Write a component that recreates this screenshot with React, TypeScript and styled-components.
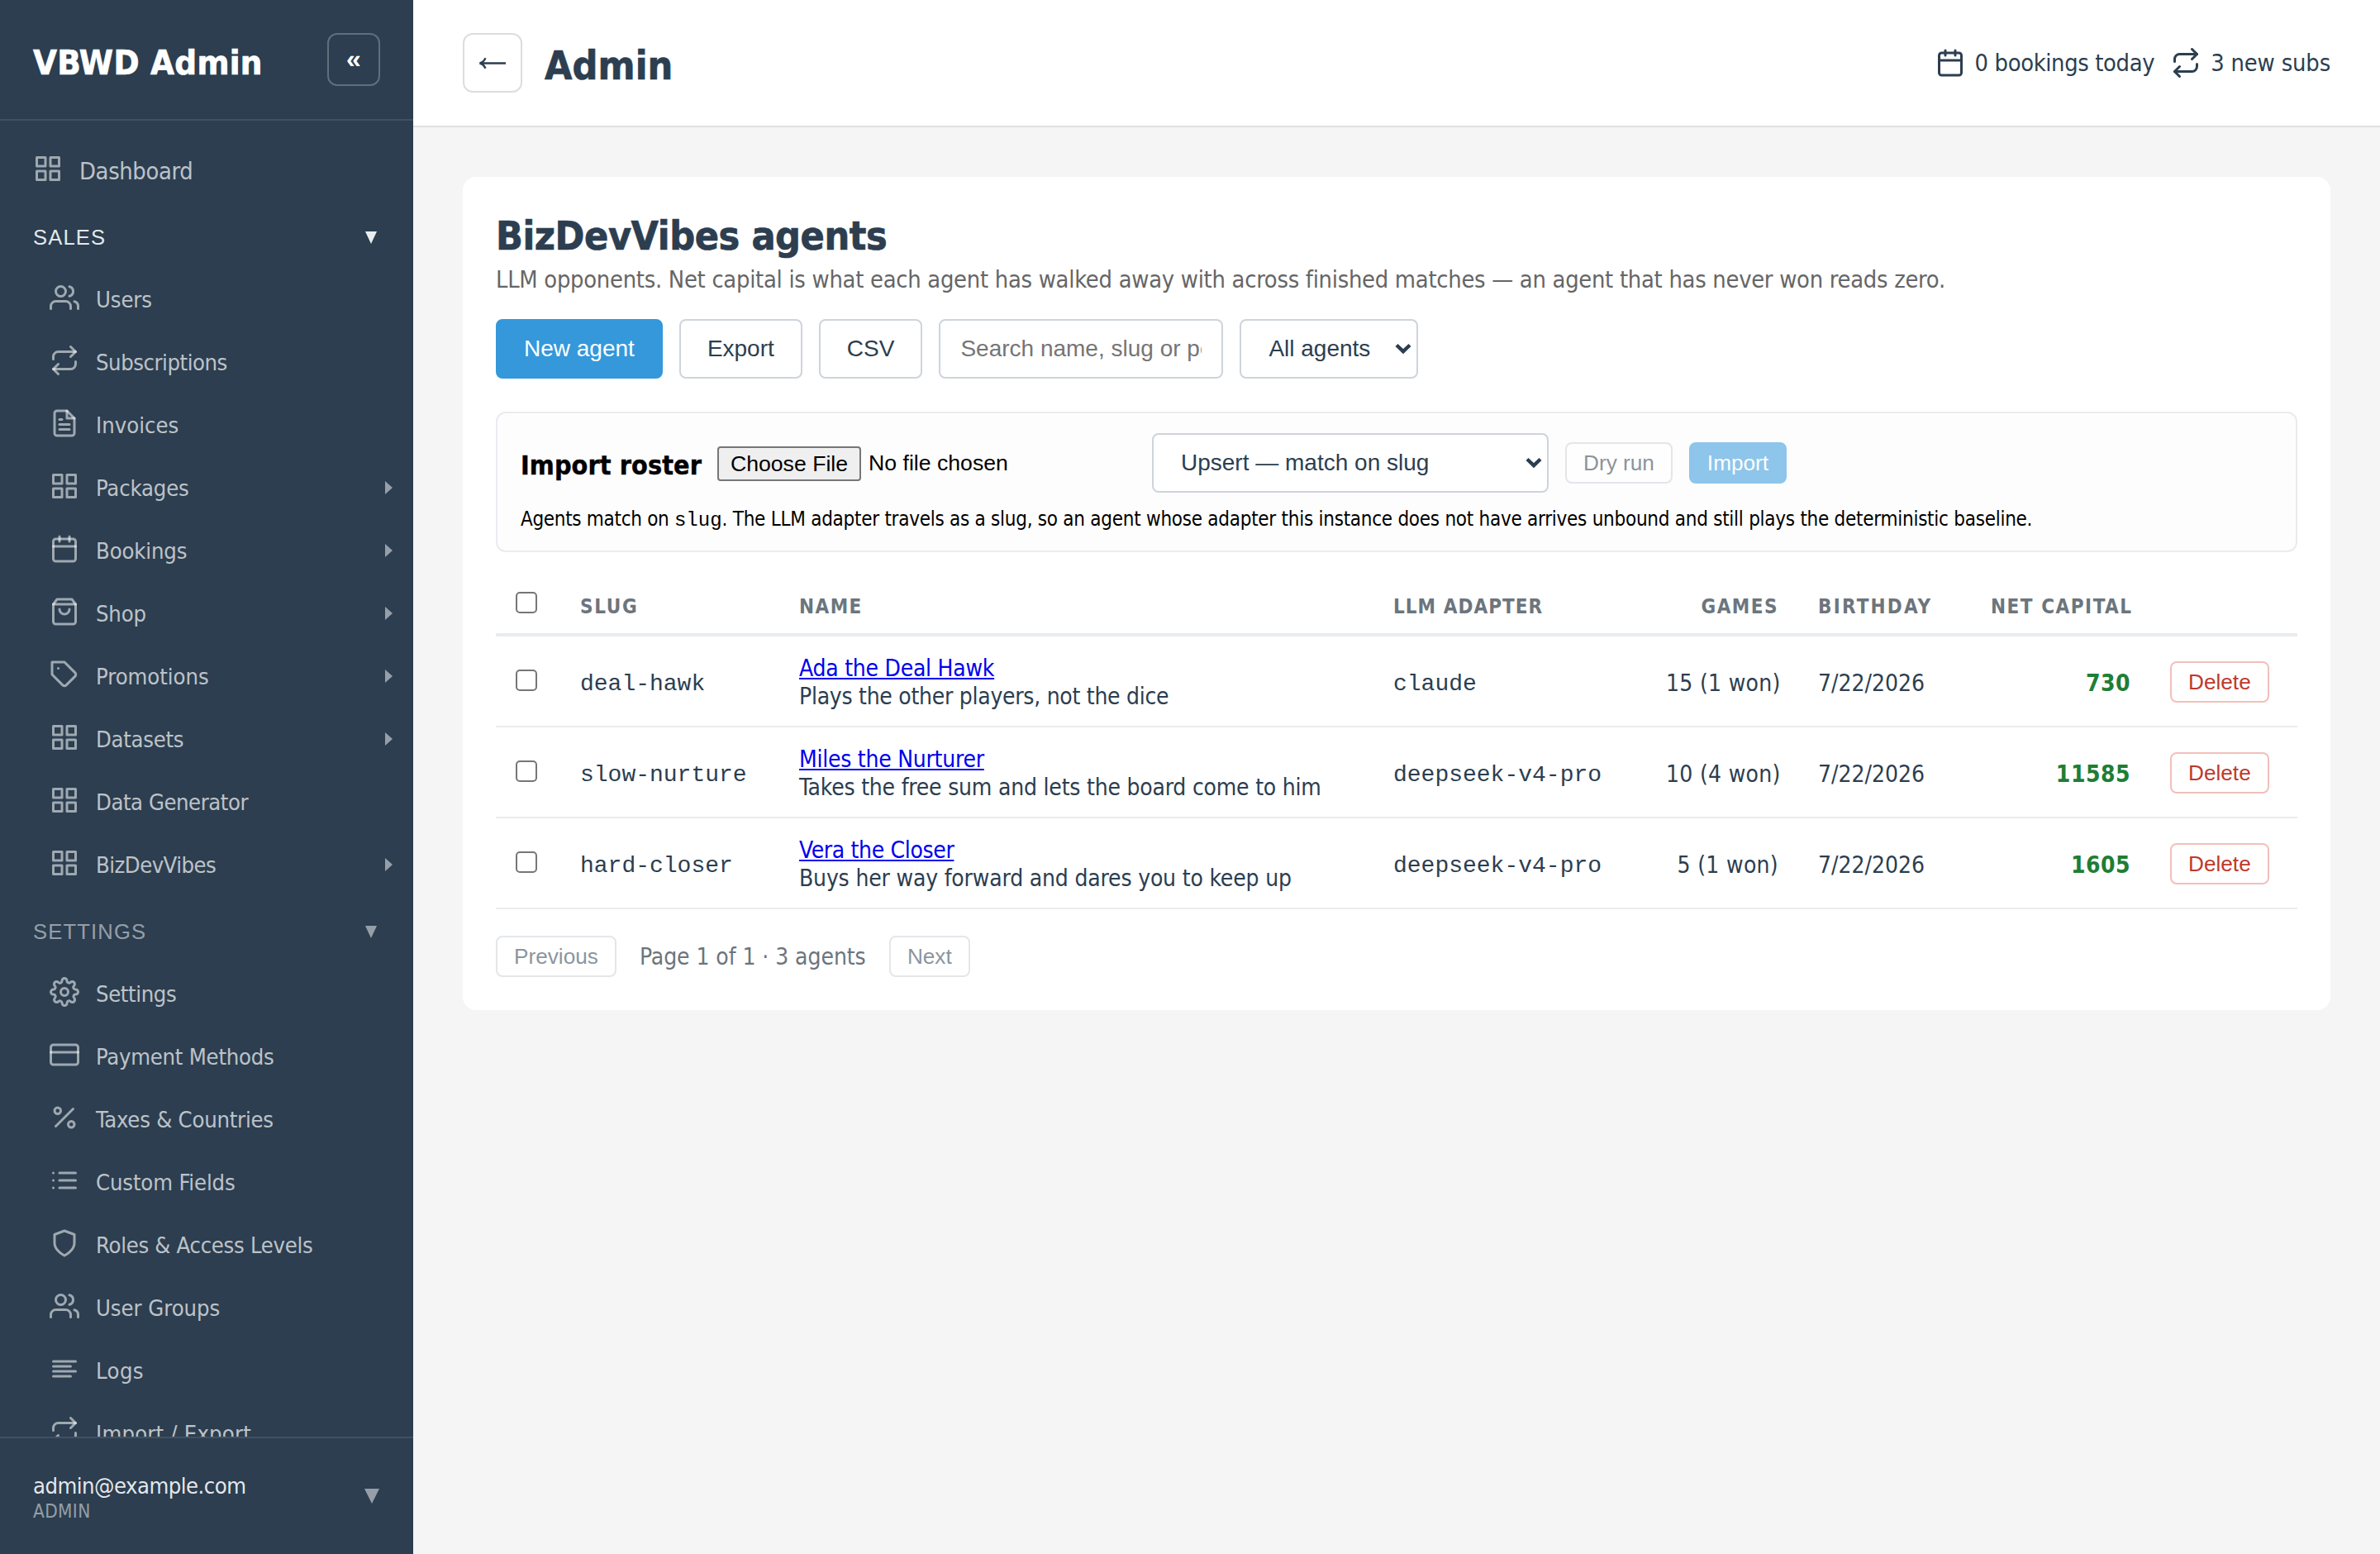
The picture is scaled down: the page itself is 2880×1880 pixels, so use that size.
import React from "react";
import styled, { createGlobalStyle, css } from "styled-components";
import type { IconType } from "react-icons";
import {
  FiAlignLeft, FiCalendar, FiCreditCard, FiFileText, FiGrid, FiList, FiPercent,
  FiRepeat, FiSettings, FiShield, FiShoppingBag, FiTag, FiUsers,
} from "react-icons/fi";

const uiFont = `"DejaVu Sans Condensed", "DejaVu Sans", sans-serif`;
const controlFont = `"Liberation Sans", Arial, sans-serif`;
const monoFont = `"Liberation Mono", "Courier New", monospace`;

const color = {
  sidebar: "#2c3e50",
  ink: "#2c3e50",
  muted: "#6c757d",
  line: "#e9ecef",
  control: "#ced4da",
  primary: "#3498db",
};

const GlobalStyle = createGlobalStyle`
  *, *::before, *::after { box-sizing: border-box; }
  body { margin: 0; background: #f5f5f5; font-family: ${uiFont}; color: ${color.ink}; }
  p { margin: 0; }
`;

/* ---------- shared ---------- */

const Text = styled.span<{ $ls?: number }>`
  display: block;
  white-space: nowrap;
  letter-spacing: ${(p) => p.$ls ?? 0}px;
`;

const Shell = styled.div`
  display: flex;
  width: 2880px;
  height: 1880px;
  overflow: hidden;
`;

/* ---------- sidebar ---------- */

const Sidebar = styled.aside`
  display: flex;
  flex-direction: column;
  flex: none;
  width: 500px;
  background: ${color.sidebar};
`;

const Brand = styled.div`
  display: flex;
  flex: none;
  align-items: center;
  justify-content: space-between;
  height: 146px;
  padding: 0 40px;
  border-bottom: 2px solid rgba(255, 255, 255, 0.1);
`;

const BrandName = styled(Text)`
  padding-top: 7px;
  font-size: 41.6px;
  line-height: 50px;
  font-weight: 700;
  color: #fff;
  -webkit-text-stroke: 0.7px currentColor;
`;

const CollapseButton = styled.button`
  width: 64px;
  height: 64px;
  padding: 0 0 2px;
  border: 2px solid rgba(255, 255, 255, 0.25);
  border-radius: 12px;
  background: transparent;
  color: #fff;
  font: 700 32px/1 ${controlFont};
`;

const Nav = styled.nav`
  flex: 1;
  min-height: 0;
  padding-top: 20px;
  overflow: hidden;
`;

const NavRow = styled.a<{ $nested?: boolean }>`
  display: flex;
  align-items: center;
  gap: 20px;
  height: 76px;
  padding: 0 25px 0 ${(p) => (p.$nested ? 60 : 40)}px;
  font-size: ${(p) => (p.$nested ? 27.2 : 28.8)}px;
  color: rgba(255, 255, 255, 0.7);

  svg {
    flex: none;
    width: 36px;
    height: 36px;
    color: rgba(255, 255, 255, 0.55);
  }
`;

const NavLabel = styled(Text)`
  flex: 1;
  padding-top: 5px;
  line-height: 36px;
`;

const NavCaret = styled.i`
  margin-top: 4px;
  border: 8px solid transparent;
  border-right-width: 0;
  border-left: 9px solid rgba(255, 255, 255, 0.5);
`;

const SectionHead = styled.div<{ $active?: boolean }>`
  display: flex;
  align-items: center;
  justify-content: space-between;
  height: 80px;
  padding: 10px 44px 0 40px;
  font: 25.6px/32px ${controlFont};
  color: rgba(255, 255, 255, ${(p) => (p.$active ? 0.9 : 0.5)});
`;

const DownCaret = styled.i<{ $size: number }>`
  border: ${(p) => p.$size / 2}px solid transparent;
  border-bottom-width: 0;
  border-top: ${(p) => p.$size}px solid currentColor;
`;

const Account = styled.div`
  display: flex;
  flex: none;
  align-items: center;
  justify-content: space-between;
  height: 142px;
  padding: 0 41px 0 40px;
  border-top: 2px solid rgba(255, 255, 255, 0.1);
  color: rgba(255, 255, 255, 0.5);
`;

const AccountMail = styled(Text)`
  font-size: 27.2px;
  line-height: 36px;
  color: rgba(255, 255, 255, 0.9);
`;

const AccountRole = styled(Text)`
  font-size: 22.4px;
  line-height: 25px;
`;

/* ---------- main ---------- */

const Main = styled.main`
  flex: 1;
  min-width: 0;
`;

const TopBar = styled.header`
  display: flex;
  align-items: center;
  height: 154px;
  padding: 0 60px;
  border-bottom: 2px solid #e0e0e0;
  background: #fff;
`;

const BackButton = styled.button`
  display: grid;
  place-items: center;
  width: 72px;
  height: 72px;
  margin-right: 27px;
  padding: 0;
  border: 2px solid #ddd;
  border-radius: 12px;
  background: #fff;
  color: ${color.ink};
`;

const PageName = styled(Text)`
  flex: 1;
  padding-top: 5px;
  font-size: 48px;
  line-height: 58px;
  font-weight: 700;
  -webkit-text-stroke: 0.7px currentColor;
`;

const Stats = styled.div`
  display: flex;
  gap: 20px;
`;

const Stat = styled.div`
  display: flex;
  align-items: center;
  gap: 12px;
  font-size: 28.8px;
  line-height: 36px;

  svg {
    width: 36px;
    height: 36px;
  }
`;

const Card = styled.section`
  height: 1008px;
  margin: 60px;
  padding: 40px;
  border-radius: 16px;
  background: #fff;
`;

const Title = styled(Text)`
  font-size: 48px;
  line-height: 62px;
  font-weight: 700;
  -webkit-text-stroke: 0.7px currentColor;
`;

const Subtitle = styled(Text)`
  margin-top: 5px;
  font-size: 28.8px;
  line-height: 34px;
  color: #666;
`;

const Toolbar = styled.div`
  display: flex;
  gap: 20px;
  margin-top: 31px;
`;

const controlBox = css`
  height: 72px;
  border: 2px solid ${color.control};
  border-radius: 8px;
  background: #fff;
  color: ${color.ink};
  font: 28px/34px ${controlFont};
`;

const Button = styled.button<{ $primary?: boolean }>`
  ${controlBox}
  padding: 0 32px;
  white-space: nowrap;
  ${(p) =>
    p.$primary &&
    css`
      border-color: ${color.primary};
      background: ${color.primary};
      color: #fff;
    `}
`;

const SmallButton = styled.button<{ $tone?: "primary" | "danger" }>`
  height: 50px;
  padding: 0 20px;
  border: 2px solid ${color.control};
  border-radius: 8px;
  background: #fff;
  color: ${color.ink};
  font: 26.2px/30px ${controlFont};
  white-space: nowrap;

  &:disabled {
    opacity: 0.55;
  }

  ${(p) =>
    p.$tone === "primary" &&
    css`
      border-color: ${color.primary};
      background: ${color.primary};
      color: #fff;
    `}
  ${(p) =>
    p.$tone === "danger" &&
    css`
      border-color: #f1c0bb;
      color: #c0392b;
    `}
`;

const SearchInput = styled.input`
  ${controlBox}
  width: 344px;
  padding: 0 24px;

  &::placeholder {
    color: #757575;
    opacity: 1;
  }
`;

const SelectBox = styled.div<{ $width: number }>`
  ${controlBox}
  display: flex;
  align-items: center;
  justify-content: space-between;
  width: ${(p) => p.$width}px;
  padding: 0 6px 0 33px;
  white-space: nowrap;
`;

const ImportPanel = styled.div`
  height: 170px;
  margin-top: 40px;
  padding: 24px 28px;
  border: 2px solid ${color.line};
  border-radius: 12px;
  background: #fdfdfd;
  color: #000;
`;

const ImportRow = styled.div`
  display: flex;
  align-items: center;
  gap: 20px;
`;

const ImportTitle = styled(Text)`
  width: 218px;
  padding-top: 6px;
  font-size: 32px;
  line-height: 38px;
  font-weight: 700;
  -webkit-text-stroke: 0.4px currentColor;
`;

const FileField = styled.div`
  display: flex;
  align-items: center;
  gap: 9px;
  width: 506px;
  font: 26.67px/32px ${controlFont};
`;

const FileButton = styled.button`
  height: 42px;
  width: 174px;
  margin-top: 2px;
  padding: 0;
  border: 2px solid #767676;
  border-radius: 4px;
  background: #efefef;
  color: #000;
  font: inherit;
`;

const Hint = styled.p`
  margin-top: 17px;
  font-size: 24px;
  line-height: 30px;
  white-space: nowrap;

  code {
    font-family: ${monoFont};
    letter-spacing: 0;
  }
`;

const HintPart = styled.span<{ $ls: number }>`
  letter-spacing: ${(p) => p.$ls}px;
`;

const Table = styled.table`
  width: 2180px;
  margin-top: 24px;
  border-collapse: separate;
  border-spacing: 0;
  table-layout: fixed;
`;

const Col = styled.col<{ $w: number }>`
  width: ${(p) => p.$w}px;
`;

const Th = styled.th<{ $right?: boolean }>`
  height: 78px;
  padding: 9px 24px 0;
  border-bottom: 4px solid ${color.line};
  color: ${color.muted};
  font-size: 24px;
  line-height: 30px;
  font-weight: 700;
  text-align: ${(p) => (p.$right ? "right" : "left")};
`;

const Td = styled.td<{ $right?: boolean; $top?: number }>`
  height: 110px;
  padding: ${(p) => p.$top ?? 0}px 24px 0;
  border-bottom: 2px solid ${color.line};
  font-size: 28px;
  line-height: 34px;
  text-align: ${(p) => (p.$right ? "right" : "left")};
`;

const Checkbox = styled.input.attrs({ type: "checkbox" })<{ $lift: number }>`
  display: block;
  appearance: none;
  width: 26px;
  height: 26px;
  margin: 0 0 ${(p) => p.$lift}px;
  border: 2px solid #767676;
  border-radius: 5px;
  background: #fff;
`;

const Slug = styled.code`
  font: 28px/34px ${monoFont};
`;

const AgentLink = styled(Text).attrs({ as: "a" })`
  width: fit-content;
  color: #0000ee;
  text-decoration: underline;
  text-decoration-thickness: 2px;
  text-underline-offset: 2px;
`;

const Capital = styled(Text)`
  color: #1e7e34;
  font-weight: 700;
`;

const Pager = styled.div`
  display: flex;
  align-items: center;
  gap: 28px;
  margin-top: 32px;
`;

const PageInfo = styled(Text)`
  width: 274px;
  padding-top: 1px;
  font-size: 28px;
  line-height: 36px;
  color: ${color.muted};
`;

/* ---------- data ---------- */

type NavItem = { icon: IconType; label: string; ls: number; expandable?: boolean };

const sales: NavItem[] = [
  { icon: FiUsers, label: "Users", ls: -0.12 },
  { icon: FiRepeat, label: "Subscriptions", ls: -0.45 },
  { icon: FiFileText, label: "Invoices", ls: 0 },
  { icon: FiGrid, label: "Packages", ls: -0.17, expandable: true },
  { icon: FiCalendar, label: "Bookings", ls: -0.14, expandable: true },
  { icon: FiShoppingBag, label: "Shop", ls: -0.16, expandable: true },
  { icon: FiTag, label: "Promotions", ls: -0.04, expandable: true },
  { icon: FiGrid, label: "Datasets", ls: -0.3, expandable: true },
  { icon: FiGrid, label: "Data Generator", ls: -0.45 },
  { icon: FiGrid, label: "BizDevVibes", ls: -0.53, expandable: true },
];

const settings: NavItem[] = [
  { icon: FiSettings, label: "Settings", ls: -0.37 },
  { icon: FiCreditCard, label: "Payment Methods", ls: -0.25 },
  { icon: FiPercent, label: "Taxes & Countries", ls: -0.23 },
  { icon: FiList, label: "Custom Fields", ls: -0.15 },
  { icon: FiShield, label: "Roles & Access Levels", ls: -0.3 },
  { icon: FiUsers, label: "User Groups", ls: -0.04 },
  { icon: FiAlignLeft, label: "Logs", ls: 0.4 },
  { icon: FiRepeat, label: "Import / Export", ls: 0.2 },
];

const agents = [
  { slug: "deal-hawk", name: "Ada the Deal Hawk", nameLs: -0.25, note: "Plays the other players, not the dice", noteLs: -0.27, adapter: "claude", games: "15 (1 won)", capital: 730 },
  { slug: "slow-nurture", name: "Miles the Nurturer", nameLs: -0.25, note: "Takes the free sum and lets the board come to him", noteLs: -0.21, adapter: "deepseek-v4-pro", games: "10 (4 won)", capital: 11585 },
  { slug: "hard-closer", name: "Vera the Closer", nameLs: -0.35, note: "Buys her way forward and dares you to keep up", noteLs: -0.18, adapter: "deepseek-v4-pro", games: "5 (1 won)", capital: 1605 },
];

const columns = [78, 265, 719, 330, 184, 209, 217, 178];

/* ---------- pieces ---------- */

const NavList = ({ entries }: { entries: NavItem[] }) => (
  <>
    {entries.map(({ icon: Icon, label, ls, expandable }) => (
      <NavRow key={label} $nested>
        <Icon />
        <NavLabel $ls={ls}>{label}</NavLabel>
        {expandable && <NavCaret />}
      </NavRow>
    ))}
  </>
);

const Chevron = () => (
  <svg width="20" height="14" viewBox="0 0 20 14" fill="none" stroke="currentColor" strokeWidth="4.4">
    <path d="M2 2.5l8 7.6 8-7.6" />
  </svg>
);

const BackArrow = () => (
  <svg width="34" height="16" viewBox="0 0 34 16" fill="none" stroke="currentColor" strokeWidth="2.4">
    <path d="M33 8.500H2M8.500 2.300C7 5.500 4.500 7.800 1.500 8.500c3 .7 5.500 3 7 6.200" />
  </svg>
);

export default function App() {
  return (
    <Shell>
      <GlobalStyle />
      <Sidebar>
        <Brand>
          <BrandName $ls={0.3}>VBWD Admin</BrandName>
          <CollapseButton>«</CollapseButton>
        </Brand>
        <Nav>
          <NavRow>
            <FiGrid />
            <NavLabel $ls={-0.35}>Dashboard</NavLabel>
          </NavRow>
          <SectionHead $active>
            <Text $ls={1.15}>SALES</Text>
            <DownCaret $size={15} />
          </SectionHead>
          <NavList entries={sales} />
          <SectionHead>
            <Text $ls={1.15}>SETTINGS</Text>
            <DownCaret $size={15} />
          </SectionHead>
          <NavList entries={settings} />
        </Nav>
        <Account>
          <div>
            <AccountMail $ls={-0.52}>admin@example.com</AccountMail>
            <AccountRole $ls={0.4}>ADMIN</AccountRole>
          </div>
          <DownCaret $size={18} />
        </Account>
      </Sidebar>

      <Main>
        <TopBar>
          <BackButton>
            <BackArrow />
          </BackButton>
          <PageName $ls={0.1}>Admin</PageName>
          <Stats>
            <Stat>
              <FiCalendar />
              <Text $ls={-0.36}>0 bookings today</Text>
            </Stat>
            <Stat>
              <FiRepeat />
              <Text $ls={-0.15}>3 new subs</Text>
            </Stat>
          </Stats>
        </TopBar>

        <Card>
          <Title $ls={-0.42}>BizDevVibes agents</Title>
          <Subtitle $ls={-0.275}>
            LLM opponents. Net capital is what each agent has walked away with across finished matches — an agent that has never won reads zero.
          </Subtitle>

          <Toolbar>
            <Button $primary>New agent</Button>
            <Button>Export</Button>
            <Button>CSV</Button>
            <SearchInput placeholder="Search name, slug or personality" />
            <SelectBox $width={216}>
              All agents
              <Chevron />
            </SelectBox>
          </Toolbar>

          <ImportPanel>
            <ImportRow>
              <ImportTitle $ls={0.1}>Import roster</ImportTitle>
              <FileField>
                <FileButton>Choose File</FileButton>
                No file chosen
              </FileField>
              <SelectBox $width={480}>
                Upsert — match on slug
                <Chevron />
              </SelectBox>
              <SmallButton disabled>Dry run</SmallButton>
              <SmallButton $tone="primary" disabled>
                Import
              </SmallButton>
            </ImportRow>
            <Hint>
              <HintPart $ls={-0.31}>Agents match on </HintPart>
              <code>slug</code>
              <HintPart $ls={-0.266}>
                . The LLM adapter travels as a slug, so an agent whose adapter this instance does not have arrives unbound and still plays the deterministic baseline.
              </HintPart>
            </Hint>
          </ImportPanel>

          <Table>
            <colgroup>
              {columns.map((w, i) => (
                <Col key={i} $w={w} />
              ))}
            </colgroup>
            <thead>
              <tr>
                <Th>
                  <Checkbox $lift={9} />
                </Th>
                <Th><Text $ls={1.67}>SLUG</Text></Th>
                <Th><Text $ls={1.44}>NAME</Text></Th>
                <Th><Text $ls={1.04}>LLM ADAPTER</Text></Th>
                <Th $right><Text $ls={1.45}>GAMES</Text></Th>
                <Th><Text $ls={2.2}>BIRTHDAY</Text></Th>
                <Th $right><Text $ls={1.52}>NET CAPITAL</Text></Th>
                <Th />
              </tr>
            </thead>
            <tbody>
              {agents.map((a) => (
                <tr key={a.slug}>
                  <Td>
                    <Checkbox $lift={2} />
                  </Td>
                  <Td $top={6}><Slug>{a.slug}</Slug></Td>
                  <Td $top={3}>
                    <AgentLink $ls={a.nameLs}>{a.name}</AgentLink>
                    <Text $ls={a.noteLs}>{a.note}</Text>
                  </Td>
                  <Td $top={6}><Slug>{a.adapter}</Slug></Td>
                  <Td $right $top={5}><Text $ls={0.3}>{a.games}</Text></Td>
                  <Td $top={5}><Text $ls={0}>7/22/2026</Text></Td>
                  <Td $right $top={5}><Capital $ls={0.5}>{a.capital}</Capital></Td>
                  <Td $top={2}>
                    <SmallButton $tone="danger">Delete</SmallButton>
                  </Td>
                </tr>
              ))}
            </tbody>
          </Table>

          <Pager>
            <SmallButton disabled>Previous</SmallButton>
            <PageInfo $ls={-0.06}>Page 1 of 1 · 3 agents</PageInfo>
            <SmallButton disabled>Next</SmallButton>
          </Pager>
        </Card>
      </Main>
    </Shell>
  );
}
